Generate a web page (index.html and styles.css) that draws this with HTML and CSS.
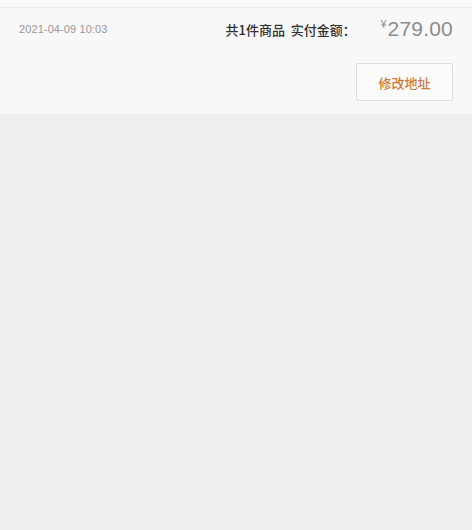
FILE: index.html
```html
<!DOCTYPE html>
<html lang="zh">
<head>
<meta charset="utf-8">
<link rel="stylesheet" href="styles.css">
</head>
<body>
<div class="card">
  <div class="topline"></div>
  <div class="row">
    <span class="time">2021-04-09 10:03</span>
    <div class="sum">
      <span class="label">共1件商品&nbsp;&nbsp;实付金额：</span>
      <span class="price"><span class="yen">¥</span>279.00</span>
    </div>
  </div>
  <div class="actions">
    <button class="btn">修改地址</button>
  </div>
</div>
</body>
</html>
```
FILE: styles.css
```css
html, body {
  margin: 0;
  padding: 0;
  background: #efefef;
  font-family: "Noto Sans CJK SC", "Liberation Sans", sans-serif;
  width: 472px;
  height: 530px;
}
.card {
  background: #f8f8f8;
  height: 114px;
  box-sizing: border-box;
}
.topline {
  height: 8px;
  border-bottom: 1px solid #ececec;
  background: #f9f9f9;
  box-sizing: border-box;
}
.row {
  display: flex;
  align-items: center;
  justify-content: space-between;
  padding: 1px 19px 0 19px;
  height: 40px;
}
.time {
  font-family: "Liberation Sans", "Noto Sans CJK SC", sans-serif;
  font-size: 11px;
  color: #979797;
  letter-spacing: 0.1px;
}
.sum {
  display: flex;
  align-items: center;
}
.label {
  font-size: 13px;
  font-weight: 500;
  color: #333;
  margin-right: 25px;
}
.price {
  font-family: "Liberation Sans", sans-serif;
  font-size: 21px;
  color: #8c8c8c;
  letter-spacing: 0.2px;
}
.yen {
  font-size: 10px;
  vertical-align: 8px;
  margin-right: 1px;
}
.actions {
  display: flex;
  justify-content: flex-end;
  padding: 14px 19px 0 0;
}
.btn {
  width: 97px;
  height: 38px;
  border: 1px solid #e2dcd4;
  border-radius: 2px;
  background: #fbfbfb;
  color: #cc7a36;
  font-family: "Noto Sans CJK SC", sans-serif;
  font-weight: 500;
  font-size: 13px;
  padding: 0;
}
```
